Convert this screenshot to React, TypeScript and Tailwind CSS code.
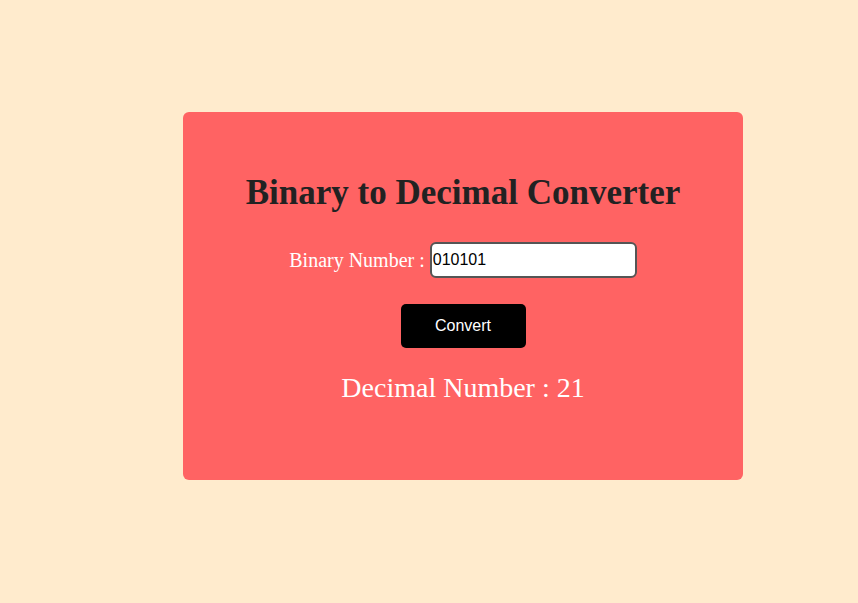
import React, { useState } from "react"

const App = () => {
  const [binary, setBinary] = useState("010101")
  const [decimal, setDecimal] = useState(21)

  const convert = () => {
    const n = parseInt(binary, 2)
    setDecimal(isNaN(n) ? 0 : n)
  }

  return (
    <div className="min-h-screen w-full bg-[#ffebcd] pt-[112px] pl-[183px]">
      <div className="w-[560px] h-[368px] rounded-[6px] bg-[#ff6363] flex flex-col items-center pt-[63px]">
        <h1 className="font-['Liberation_Serif',serif] font-bold text-[35px] leading-[36px] text-[#222]">
          Binary to Decimal Converter
        </h1>

        <div className="mt-[31px] flex items-center gap-[5px]">
          <label className="font-['Liberation_Serif',serif] text-[20px] text-white">
            Binary Number :
          </label>
          <input
            value={binary}
            onChange={(e) => setBinary(e.target.value)}
            className="w-[207px] h-[36px] rounded-[6px] border-2 border-[#555] bg-white px-[1px] font-['Liberation_Sans',sans-serif] text-[16px] text-black outline-none"
          />
        </div>

        <button
          onClick={convert}
          className="mt-[26px] w-[125px] h-[44px] rounded-[5px] bg-black font-['Liberation_Sans',sans-serif] text-[16px] text-white"
        >
          Convert
        </button>

        <p className="mt-[22px] font-['Liberation_Serif',serif] text-[28px] leading-[36px] text-white">
          Decimal Number : {decimal}
        </p>
      </div>
    </div>
  )
}

export default App
